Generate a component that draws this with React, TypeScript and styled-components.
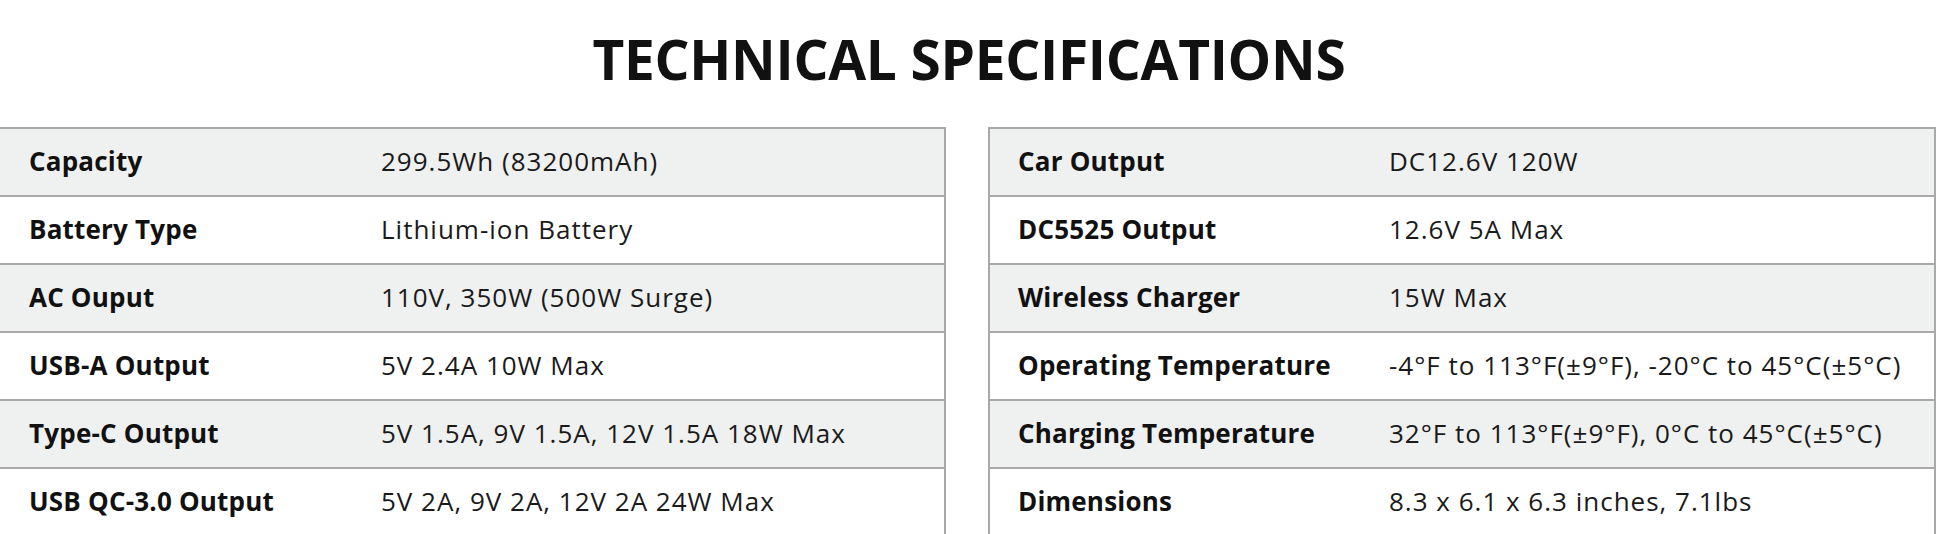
import React from "react";
import styled, { createGlobalStyle } from "styled-components";

const GlobalStyle = createGlobalStyle`
  html, body {
    margin: 0;
    padding: 0;
    background: #ffffff;
  }
  body {
    font-family: "Open Sans", "Noto Sans", Arial, sans-serif;
    color: #111111;
  }
`;

const Page = styled.div`
  width: 1938px;
  height: 534px;
  overflow: hidden;
  display: flex;
  flex-direction: column;
  align-items: stretch;
`;

const Title = styled.h1`
  flex-shrink: 0;
  margin: 0;
  padding-top: 31px;
  height: 127px;
  box-sizing: border-box;
  text-align: center;
  font-size: 55px;
  line-height: 55px;
  font-weight: 700;
  letter-spacing: -0.3px;
  color: #111111;
`;

const Tables = styled.div`
  flex-shrink: 0;
  display: grid;
  grid-template-columns: 946px 948px;
  column-gap: 42px;
  align-items: start;
`;

const Table = styled.div<{ $leftOpen?: boolean }>`
  border: 2px solid #a9a9a9;
  border-top: none;
  border-left: ${(p) => (p.$leftOpen ? "none" : "2px solid #a9a9a9")};
  box-sizing: border-box;
`;

const Row = styled.div<{ $shade: boolean; $labelWidth: number; $pad: number }>`
  display: grid;
  grid-template-columns: ${(p) => `${p.$labelWidth}px 1fr`};
  align-items: center;
  height: 68px;
  box-sizing: border-box;
  border-top: 2px solid #a9a9a9;
  padding-left: ${(p) => p.$pad}px;
  padding-bottom: 2px;
  background: ${(p) => (p.$shade ? "#eff0f0" : "#ffffff")};
`;

const Label = styled.div`
  font-size: 26px;
  font-weight: 700;
  letter-spacing: 0.2px;
  color: #111111;
  white-space: nowrap;
`;

const Value = styled.div`
  font-size: 26px;
  font-weight: 400;
  color: #1a1a1a;
  letter-spacing: 1px;
  white-space: nowrap;
`;

type Spec = [string, string];

const left: Spec[] = [
  ["Capacity", "299.5Wh (83200mAh)"],
  ["Battery Type", "Lithium-ion Battery"],
  ["AC Ouput", "110V, 350W (500W Surge)"],
  ["USB-A Output", "5V 2.4A 10W Max"],
  ["Type-C Output", "5V 1.5A, 9V 1.5A, 12V 1.5A 18W Max"],
  ["USB QC-3.0 Output", "5V 2A, 9V 2A, 12V 2A 24W Max"],
];

const right: Spec[] = [
  ["Car Output", "DC12.6V 120W"],
  ["DC5525 Output", "12.6V 5A Max"],
  ["Wireless Charger", "15W Max"],
  ["Operating Temperature", "-4°F to 113°F(±9°F), -20°C to 45°C(±5°C)"],
  ["Charging Temperature", "32°F to 113°F(±9°F), 0°C to 45°C(±5°C)"],
  ["Dimensions", "8.3 x 6.1 x 6.3 inches, 7.1lbs"],
];

function SpecTable({
  rows,
  labelWidth,
  pad,
  leftOpen,
}: {
  rows: Spec[];
  labelWidth: number;
  pad: number;
  leftOpen?: boolean;
}) {
  return (
    <Table $leftOpen={leftOpen}>
      {rows.map(([k, v], i) => (
        <Row key={k} $shade={i % 2 === 0} $labelWidth={labelWidth} $pad={pad}>
          <Label>{k}</Label>
          <Value>{v}</Value>
        </Row>
      ))}
    </Table>
  );
}

export default function App() {
  return (
    <>
      <GlobalStyle />
      <Page>
        <Title>TECHNICAL SPECIFICATIONS</Title>
        <Tables>
          <SpecTable rows={left} labelWidth={352} pad={29} leftOpen />
          <SpecTable rows={right} labelWidth={371} pad={28} />
        </Tables>
      </Page>
    </>
  );
}
